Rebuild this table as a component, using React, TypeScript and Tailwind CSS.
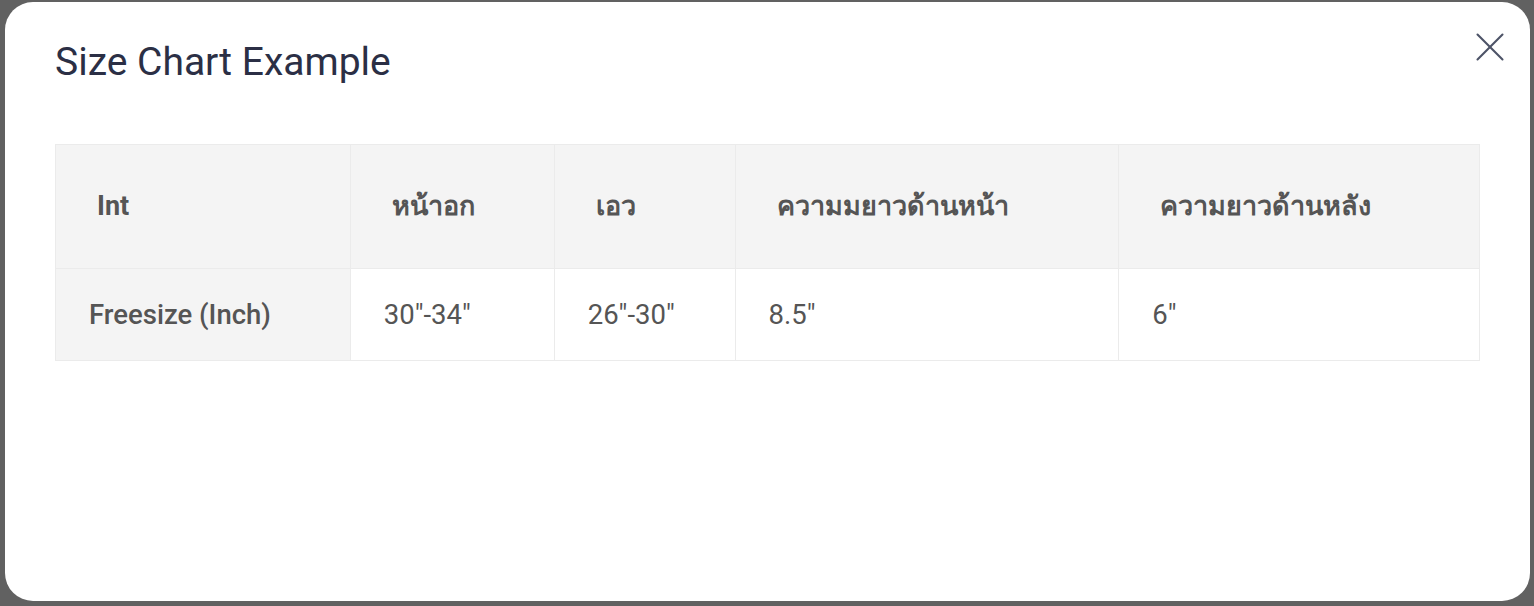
import { X } from "lucide-react";

const columns = [
  { head: "Int", value: "Freesize (Inch)", width: "w-[295px]" },
  { head: "หน้าอก", value: "30\"-34\"", width: "w-[204px]" },
  { head: "เอว", value: "26\"-30\"", width: "w-[181px]" },
  { head: "ความมยาวด้านหน้า", value: "8.5\"", width: "w-[384px]" },
  { head: "ความยาวด้านหลัง", value: "6\"", width: "w-[361px]" },
];

export default function App() {
  return (
    <div
      className="flex h-[606px] w-full bg-[#616161] pt-[2px] pr-[4px] pb-[5px] pl-[5px]"
      style={{ fontFamily: "Roboto, 'Noto Sans', sans-serif" }}
    >
      <div className="relative flex-1 rounded-[28px] bg-white px-[50px] pt-[36px]">
        <h2 className="text-[39px] leading-[48px] font-normal text-[#2b2f45]">Size Chart Example</h2>

        <button className="absolute top-[20px] right-[15px] text-[#4d5367]">
          <X size={50} strokeWidth={1} />
        </button>

        <table className="mt-[58px] w-full border-collapse border border-[#ebebeb] text-[#555555]">
          <thead>
            <tr className="h-[124px] bg-[#f4f4f4]">
              {columns.map((col) => (
                <th
                  key={col.head}
                  className={`${col.width} border border-[#ebebeb] pl-[41px] text-left text-[27px] font-bold`}
                >
                  {col.head}
                </th>
              ))}
            </tr>
          </thead>
          <tbody>
            <tr className="h-[92px]">
              {columns.map((col, i) => (
                <td
                  key={col.head}
                  className={`border border-[#ebebeb] pl-[33px] text-[27.5px] ${
                    i === 0 ? "bg-[#f4f4f4] font-medium" : "bg-white font-normal"
                  }`}
                >
                  {col.value}
                </td>
              ))}
            </tr>
          </tbody>
        </table>
      </div>
    </div>
  );
}
